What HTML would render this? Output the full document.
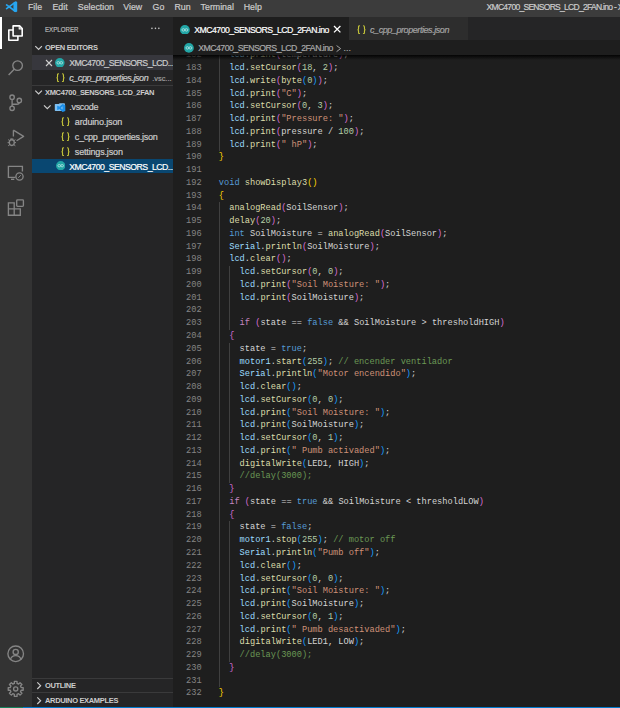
<!DOCTYPE html>
<html><head><meta charset="utf-8">
<style>
*{margin:0;padding:0;box-sizing:border-box}
html,body{width:620px;height:708px;overflow:hidden;background:#1e1e1e}
body{position:relative;font-family:"Liberation Sans",sans-serif;color:#cccccc}
.abs{position:absolute}
.t{position:absolute;white-space:pre;line-height:1;-webkit-text-stroke:0.2px currentColor}
#title{left:0;top:0;width:620px;height:16.8px;background:#3c3c3c}
#act{left:0;top:16.8px;width:32px;height:690px;background:#333333}
#side{left:32px;top:16.8px;width:141px;height:690px;background:#252526}
#tabs{left:173px;top:16.8px;width:447px;height:23.4px;background:#252526}
#status{left:0;top:706.7px;width:620px;height:2px;background:#007acc}
.menu{font-size:8.8px;color:#cccccc;top:3.3px}
.ln{position:absolute;left:173px;width:28.6px;text-align:right;font-family:"Liberation Mono",monospace;font-size:8.675px;line-height:12.764px;height:12.764px;color:#858585;white-space:pre}
.cl{position:absolute;left:218.8px;font-family:"Liberation Mono",monospace;font-size:8.675px;line-height:12.764px;height:12.764px;color:#d4d4d4;white-space:pre}
.ig{position:absolute;width:1px;background:#404040}
#editor{left:173px;top:54.4px;width:447px;height:652px;overflow:hidden;background:#1e1e1e}
#editor-inner{position:absolute;left:-173px;top:-54.4px;width:620px;height:708px}
#shadow{left:173px;top:55.2px;width:447px;height:5px;background:linear-gradient(#000000e0,#00000080 40%,#00000000)}
.sb{font-size:8.7px;color:#cccccc}
.hd{font-size:7.5px;font-weight:bold;color:#cccccc;letter-spacing:-0.33px;-webkit-text-stroke:0}
.it{font-style:italic}
</style></head><body>
<div id="title" class="abs"></div>
<!-- VS Code logo -->
<svg class="abs" style="left:0;top:0" width="24" height="16" viewBox="0 0 24 16">
<path fill="#27a6f0" d="M13.4 2.7 L15.9 1.3 L17.2 2.1 V11.5 L15.9 12.3 L13.4 11 Z"/>
<path stroke="#27a6f0" stroke-width="1.75" stroke-linecap="round" fill="none" d="M15.2 2.4 L6.6 8.6 M15.2 11.2 L6.6 4.9"/>
</svg>
<div class="t menu" id="m1" style="left:28px">File</div>
<div class="t menu" id="m2" style="left:52.5px">Edit</div>
<div class="t menu" id="m3" style="left:77.8px">Selection</div>
<div class="t menu" id="m4" style="left:123.3px">View</div>
<div class="t menu" id="m5" style="left:152.6px">Go</div>
<div class="t menu" id="m6" style="left:174.5px">Run</div>
<div class="t menu" id="m7" style="left:200.6px">Terminal</div>
<div class="t menu" id="m8" style="left:243.7px">Help</div>
<div class="t menu" id="ttl" style="left:486.6px;top:3.2px;font-size:8.5px;letter-spacing:-0.71px">XMC4700_SENSORS_LCD_2FAN.ino - XMC</div>

<div id="act" class="abs"></div>
<div class="abs" style="left:0;top:16.8px;width:1.6px;height:32px;background:#ffffff"></div>
<svg class="abs" style="left:0;top:0" width="32" height="708" viewBox="0 0 32 708" fill="none" stroke="#858585" stroke-width="1.35">
  <!-- explorer -->
  <g stroke="#ffffff" stroke-width="1.6" stroke-linejoin="round">
    <path d="M13.1 25.9 H19.6 L22.2 28.5 V36 H13.1 Z"/>
    <path d="M19.2 26.2 V28.9 H22" stroke-width="1.1"/>
    <path d="M13.1 30 H8.8 V40.3 H17.9 V36"/>
  </g>
  <!-- search -->
  <circle cx="17.6" cy="65.6" r="4.8"/>
  <path d="M14.2 69.2 L8.6 75"/>
  <!-- source control -->
  <circle cx="12.1" cy="97.2" r="2.2"/>
  <circle cx="12.1" cy="108.3" r="2.2"/>
  <circle cx="19.3" cy="100.4" r="2.2"/>
  <path d="M12.1 99.4 V106.1 M12.1 104.2 H16.8 Q19.3 104.2 19.3 102.6"/>
  <!-- run debug -->
  <path d="M13.4 130.2 V136.6 M13.4 130.2 L23.6 136.4 L16.6 140.8" stroke-linejoin="round"/>
  <ellipse cx="11.8" cy="142.6" rx="2.5" ry="2.9"/>
  <path d="M10.3 139.4 Q11.8 138.4 13.3 139.4" />
  <path d="M8.2 139.6 L9.6 140.6 M7.6 142.6 H9.2 M8.2 145.8 L9.6 144.8 M15.4 139.6 L14 140.6 M16 142.6 H14.4 M15.4 145.8 L14 144.8" stroke-width="1"/>
  <!-- remote -->
  <path d="M15.5 177.3 H8.4 V166.3 H22.4 V171.5"/>
  <path d="M11 179.3 H14.3"/>
  <circle cx="19.5" cy="176.5" r="3.6"/>
  <path d="M18.3 177.8 L20.8 175.2" stroke-width="1"/>
  <!-- extensions -->
  <path d="M8.4 202.9 H14.2 V215.2 H8.4 Z M8.4 208.9 H20.3 V215.2 H14.2"/>
  <rect x="16.7" y="199.9" width="6.7" height="6.5" rx="0.8"/>
  <!-- account -->
  <circle cx="15.7" cy="653.8" r="7.8"/>
  <circle cx="15.7" cy="651.9" r="2.6"/>
  <path d="M10.4 659.9 Q11.2 655.6 15.7 655.6 Q20.2 655.6 21 659.9"/>
  <!-- gear -->
  <circle cx="15.7" cy="688.9" r="2.1"/>
  <path stroke-linejoin="round" d="M14.35 683.47 L14.36 681.42 L17.04 681.42 L17.05 683.47 L18.59 684.10 L20.05 682.66 L21.94 684.55 L20.50 686.01 L21.13 687.55 L23.18 687.56 L23.18 690.24 L21.13 690.25 L20.50 691.79 L21.94 693.25 L20.05 695.14 L18.59 693.70 L17.05 694.33 L17.04 696.38 L14.36 696.38 L14.35 694.33 L12.81 693.70 L11.35 695.14 L9.46 693.25 L10.90 691.79 L10.27 690.25 L8.22 690.24 L8.22 687.56 L10.27 687.55 L10.90 686.01 L9.46 684.55 L11.35 682.66 L12.81 684.10 Z"/>
</svg>

<div id="side" class="abs"></div>
<div class="t" id="explorer" style="left:45.4px;top:25.9px;font-size:7.7px;color:#bbbbbb;transform:scaleX(0.80);transform-origin:0 0">EXPLORER</div>
<svg class="abs" style="left:150px;top:27px" width="12" height="3" viewBox="0 0 12 3" fill="#cccccc"><circle cx="1.95" cy="1.35" r="0.8"/><circle cx="5.45" cy="1.35" r="0.8"/><circle cx="8.85" cy="1.35" r="0.8"/></svg>
<!-- open editors -->
<svg class="abs" style="left:0;top:0" width="173" height="708" viewBox="0 0 173 708" fill="none" stroke="#cccccc" stroke-width="1.2">
  <path d="M35.3 46.2 L38.6 49.5 L41.9 46.2"/>
  <path d="M35.3 90.7 L38.6 94 L41.9 90.7"/>
  <path d="M44 105.4 L47.3 108.7 L50.6 105.4"/>
  <path d="M37.3 682.4 L40.6 685.7 L37.3 689"/>
  <path d="M37.3 697.4 L40.6 700.7 L37.3 704"/>
</svg>
<div class="t hd" id="oe" style="left:45px;top:44.0px">OPEN EDITORS</div>
<div class="abs" style="left:32px;top:55.2px;width:140.7px;height:14.8px;background:#37373d"></div>
<div class="abs" style="left:32px;top:158.5px;width:140.7px;height:14.8px;background:#094771"></div>

<div class="abs" style="left:32px;top:84.7px;width:141px;height:1px;background:#3a3a3b"></div>
<div class="t hd" id="proj" style="left:45px;top:88.7px">XMC4700_SENSORS_LCD_2FAN</div>
<div class="abs" style="left:32px;top:677.9px;width:141px;height:1px;background:#3a3a3b"></div>
<div class="abs" style="left:32px;top:692.4px;width:141px;height:1px;background:#3a3a3b"></div>
<div class="t hd" id="outl" style="left:45px;top:681.8px">OUTLINE</div>
<div class="t hd" id="ardex" style="left:45px;top:696.8px">ARDUINO EXAMPLES</div>

<div class="abs" style="left:0;top:0;width:172.7px;height:708px;overflow:hidden">
<svg class="abs" style="left:45.30px;top:58.65px" width="8.00" height="8.00" viewBox="-4.0 -4.0 8.0 8.0" stroke="#d0d0d0" stroke-width="1.1"><path d="M-3.0 -3.0 L3.0 3.0 M3.0 -3.0 L-3.0 3.0"/></svg>
<svg class="abs" style="left:55.30px;top:57.85px" width="9.60" height="9.60" viewBox="-5 -5 10 10"><circle r="5" fill="#22a6a6"/><ellipse cx="-1.55" cy="0" rx="1.45" ry="1.25" fill="none" stroke="#b8e4e4" stroke-width="0.85"/><ellipse cx="1.55" cy="0" rx="1.45" ry="1.25" fill="none" stroke="#b8e4e4" stroke-width="0.85"/></svg>
<div class="t" id="r1" style="left:69.20px;top:59.04px;font-size:8.7px;color:#cccccc;letter-spacing:-0.5px">XMC4700_SENSORS_LCD...</div>
<svg class="abs" style="left:55.50px;top:72.60px" width="9.0" height="9.4" viewBox="0 0 18 19" fill="none" stroke="#c4c43a" stroke-width="2.3" stroke-linecap="round"><path d="M5 1.5 C3 1.5 3 2.5 3 4.5 V7.5 C3 9 2.5 9.5 1 9.5 C2.5 9.5 3 10 3 11.5 V14.5 C3 16.5 3 17.5 5 17.5"/><path d="M13 1.5 C15 1.5 15 2.5 15 4.5 V7.5 C15 9 15.5 9.5 17 9.5 C15.5 9.5 15 10 15 11.5 V14.5 C15 16.5 15 17.5 13 17.5"/></svg>
<div class="t" id="r2" style="left:69.20px;top:73.68px;font-size:9.0px;color:#cccccc;font-style:italic;letter-spacing:-0.43px">c_cpp_properties.json</div>
<div class="t" id="r2b" style="left:152.20px;top:75.04px;font-size:7.4px;color:#a0a0a0;">.vsc...</div>
<svg class="abs" style="left:52px;top:100px" width="16" height="14" viewBox="52 100 16 14"><path d="M54.8 104.6 Q54.8 104 55.4 104 L58.6 104 L59.8 103.2 L64.2 103.2 Q64.9 103.2 64.9 103.9 L64.9 110.2 Q64.9 110.9 64.2 110.9 L55.5 110.9 Q54.8 110.9 54.8 110.2 Z" fill="#7fbff0"/><path d="M62.6 104.0 L65.3 105.2 V110.9 L62.6 112.1 L59.3 109.1 L57.9 110.1 L57.2 109.7 V106.1 L57.9 105.7 L59.3 106.8 Z M62.6 106.2 L60.8 107.9 L62.6 109.6 Z" fill="#1c8fea"/></svg>
<div class="t" id="vs" style="left:69.20px;top:103.48px;font-size:9.0px;color:#cccccc;letter-spacing:-0.28px">.vscode</div>
<svg class="abs" style="left:61.00px;top:116.90px" width="9.0" height="9.4" viewBox="0 0 18 19" fill="none" stroke="#c4c43a" stroke-width="2.3" stroke-linecap="round"><path d="M5 1.5 C3 1.5 3 2.5 3 4.5 V7.5 C3 9 2.5 9.5 1 9.5 C2.5 9.5 3 10 3 11.5 V14.5 C3 16.5 3 17.5 5 17.5"/><path d="M13 1.5 C15 1.5 15 2.5 15 4.5 V7.5 C15 9 15.5 9.5 17 9.5 C15.5 9.5 15 10 15 11.5 V14.5 C15 16.5 15 17.5 13 17.5"/></svg>
<div class="t" id="aj" style="left:74.80px;top:118.38px;font-size:9.0px;color:#cccccc;letter-spacing:-0.14px">arduino.json</div>
<svg class="abs" style="left:61.00px;top:132.10px" width="9.0" height="9.4" viewBox="0 0 18 19" fill="none" stroke="#c4c43a" stroke-width="2.3" stroke-linecap="round"><path d="M5 1.5 C3 1.5 3 2.5 3 4.5 V7.5 C3 9 2.5 9.5 1 9.5 C2.5 9.5 3 10 3 11.5 V14.5 C3 16.5 3 17.5 5 17.5"/><path d="M13 1.5 C15 1.5 15 2.5 15 4.5 V7.5 C15 9 15.5 9.5 17 9.5 C15.5 9.5 15 10 15 11.5 V14.5 C15 16.5 15 17.5 13 17.5"/></svg>
<div class="t" id="cj" style="left:74.80px;top:133.18px;font-size:9.0px;color:#cccccc;letter-spacing:-0.25px">c_cpp_properties.json</div>
<svg class="abs" style="left:61.00px;top:146.90px" width="9.0" height="9.4" viewBox="0 0 18 19" fill="none" stroke="#c4c43a" stroke-width="2.3" stroke-linecap="round"><path d="M5 1.5 C3 1.5 3 2.5 3 4.5 V7.5 C3 9 2.5 9.5 1 9.5 C2.5 9.5 3 10 3 11.5 V14.5 C3 16.5 3 17.5 5 17.5"/><path d="M13 1.5 C15 1.5 15 2.5 15 4.5 V7.5 C15 9 15.5 9.5 17 9.5 C15.5 9.5 15 10 15 11.5 V14.5 C15 16.5 15 17.5 13 17.5"/></svg>
<div class="t" id="sj" style="left:74.80px;top:147.98px;font-size:9.0px;color:#cccccc;letter-spacing:-0.16px">settings.json</div>
<svg class="abs" style="left:55.50px;top:161.00px" width="9.40" height="9.40" viewBox="-5 -5 10 10"><circle r="5" fill="#22a6a6"/><ellipse cx="-1.55" cy="0" rx="1.45" ry="1.25" fill="none" stroke="#b8e4e4" stroke-width="0.85"/><ellipse cx="1.55" cy="0" rx="1.45" ry="1.25" fill="none" stroke="#b8e4e4" stroke-width="0.85"/></svg>
<div class="t" id="r3" style="left:69.20px;top:162.94px;font-size:8.7px;color:#ffffff;letter-spacing:-0.5px">XMC4700_SENSORS_LCD...</div>
</div>

<div id="tabs" class="abs"></div>
<div class="abs" style="left:173.2px;top:16.8px;width:175.8px;height:23.4px;background:#1e1e1e"></div>
<div class="abs" style="left:349px;top:16.8px;width:119px;height:23.4px;background:#2d2d2d"></div>

<div id="editor" class="abs"><div id="editor-inner">
<div class="ln" style="top:49.218px">182</div>
<div class="cl" style="top:49.218px">  <span style="color:#9cdcfe">lcd</span><span style="color:#d4d4d4">.</span><span style="color:#dcdcaa">print</span><span style="color:#da70d6">(</span><span style="color:#d4d4d4">temperature</span><span style="color:#da70d6">)</span><span style="color:#d4d4d4">;</span></div>
<div class="ln" style="top:61.982px">183</div>
<div class="cl" style="top:61.982px">  <span style="color:#9cdcfe">lcd</span><span style="color:#d4d4d4">.</span><span style="color:#dcdcaa">setCursor</span><span style="color:#da70d6">(</span><span style="color:#b5cea8">18</span><span style="color:#d4d4d4">,</span> <span style="color:#b5cea8">2</span><span style="color:#da70d6">)</span><span style="color:#d4d4d4">;</span></div>
<div class="ln" style="top:74.746px">184</div>
<div class="cl" style="top:74.746px">  <span style="color:#9cdcfe">lcd</span><span style="color:#d4d4d4">.</span><span style="color:#dcdcaa">write</span><span style="color:#da70d6">(</span><span style="color:#dcdcaa">byte</span><span style="color:#179fff">(</span><span style="color:#b5cea8">0</span><span style="color:#179fff">)</span><span style="color:#da70d6">)</span><span style="color:#d4d4d4">;</span></div>
<div class="ln" style="top:87.510px">185</div>
<div class="cl" style="top:87.510px">  <span style="color:#9cdcfe">lcd</span><span style="color:#d4d4d4">.</span><span style="color:#dcdcaa">print</span><span style="color:#da70d6">(</span><span style="color:#ce9178">&quot;C&quot;</span><span style="color:#da70d6">)</span><span style="color:#d4d4d4">;</span></div>
<div class="ln" style="top:100.274px">186</div>
<div class="cl" style="top:100.274px">  <span style="color:#9cdcfe">lcd</span><span style="color:#d4d4d4">.</span><span style="color:#dcdcaa">setCursor</span><span style="color:#da70d6">(</span><span style="color:#b5cea8">0</span><span style="color:#d4d4d4">,</span> <span style="color:#b5cea8">3</span><span style="color:#da70d6">)</span><span style="color:#d4d4d4">;</span></div>
<div class="ln" style="top:113.038px">187</div>
<div class="cl" style="top:113.038px">  <span style="color:#9cdcfe">lcd</span><span style="color:#d4d4d4">.</span><span style="color:#dcdcaa">print</span><span style="color:#da70d6">(</span><span style="color:#ce9178">&quot;Pressure: &quot;</span><span style="color:#da70d6">)</span><span style="color:#d4d4d4">;</span></div>
<div class="ln" style="top:125.802px">188</div>
<div class="cl" style="top:125.802px">  <span style="color:#9cdcfe">lcd</span><span style="color:#d4d4d4">.</span><span style="color:#dcdcaa">print</span><span style="color:#da70d6">(</span><span style="color:#d4d4d4">pressure</span> <span style="color:#d4d4d4">/</span> <span style="color:#b5cea8">100</span><span style="color:#da70d6">)</span><span style="color:#d4d4d4">;</span></div>
<div class="ln" style="top:138.566px">189</div>
<div class="cl" style="top:138.566px">  <span style="color:#9cdcfe">lcd</span><span style="color:#d4d4d4">.</span><span style="color:#dcdcaa">print</span><span style="color:#da70d6">(</span><span style="color:#ce9178">&quot; hP&quot;</span><span style="color:#da70d6">)</span><span style="color:#d4d4d4">;</span></div>
<div class="ln" style="top:151.330px">190</div>
<div class="cl" style="top:151.330px"><span style="color:#ffd700">}</span></div>
<div class="ln" style="top:164.094px">191</div>
<div class="cl" style="top:164.094px"></div>
<div class="ln" style="top:176.858px">192</div>
<div class="cl" style="top:176.858px"><span style="color:#569cd6">void</span> <span style="color:#dcdcaa">showDisplay3</span><span style="color:#ffd700">(</span><span style="color:#ffd700">)</span></div>
<div class="ln" style="top:189.622px">193</div>
<div class="cl" style="top:189.622px"><span style="color:#ffd700">{</span></div>
<div class="ln" style="top:202.386px">194</div>
<div class="cl" style="top:202.386px">  <span style="color:#dcdcaa">analogRead</span><span style="color:#da70d6">(</span><span style="color:#d4d4d4">SoilSensor</span><span style="color:#da70d6">)</span><span style="color:#d4d4d4">;</span></div>
<div class="ln" style="top:215.150px">195</div>
<div class="cl" style="top:215.150px">  <span style="color:#dcdcaa">delay</span><span style="color:#da70d6">(</span><span style="color:#b5cea8">20</span><span style="color:#da70d6">)</span><span style="color:#d4d4d4">;</span></div>
<div class="ln" style="top:227.914px">196</div>
<div class="cl" style="top:227.914px">  <span style="color:#569cd6">int</span> <span style="color:#d4d4d4">SoilMoisture</span> <span style="color:#d4d4d4">=</span> <span style="color:#dcdcaa">analogRead</span><span style="color:#da70d6">(</span><span style="color:#d4d4d4">SoilSensor</span><span style="color:#da70d6">)</span><span style="color:#d4d4d4">;</span></div>
<div class="ln" style="top:240.678px">197</div>
<div class="cl" style="top:240.678px">  <span style="color:#9cdcfe">Serial</span><span style="color:#d4d4d4">.</span><span style="color:#dcdcaa">println</span><span style="color:#da70d6">(</span><span style="color:#d4d4d4">SoilMoisture</span><span style="color:#da70d6">)</span><span style="color:#d4d4d4">;</span></div>
<div class="ln" style="top:253.442px">198</div>
<div class="cl" style="top:253.442px">  <span style="color:#9cdcfe">lcd</span><span style="color:#d4d4d4">.</span><span style="color:#dcdcaa">clear</span><span style="color:#da70d6">(</span><span style="color:#da70d6">)</span><span style="color:#d4d4d4">;</span></div>
<div class="ln" style="top:266.206px">199</div>
<div class="cl" style="top:266.206px">    <span style="color:#9cdcfe">lcd</span><span style="color:#d4d4d4">.</span><span style="color:#dcdcaa">setCursor</span><span style="color:#da70d6">(</span><span style="color:#b5cea8">0</span><span style="color:#d4d4d4">,</span> <span style="color:#b5cea8">0</span><span style="color:#da70d6">)</span><span style="color:#d4d4d4">;</span></div>
<div class="ln" style="top:278.970px">200</div>
<div class="cl" style="top:278.970px">    <span style="color:#9cdcfe">lcd</span><span style="color:#d4d4d4">.</span><span style="color:#dcdcaa">print</span><span style="color:#da70d6">(</span><span style="color:#ce9178">&quot;Soil Moisture: &quot;</span><span style="color:#da70d6">)</span><span style="color:#d4d4d4">;</span></div>
<div class="ln" style="top:291.734px">201</div>
<div class="cl" style="top:291.734px">    <span style="color:#9cdcfe">lcd</span><span style="color:#d4d4d4">.</span><span style="color:#dcdcaa">print</span><span style="color:#da70d6">(</span><span style="color:#d4d4d4">SoilMoisture</span><span style="color:#da70d6">)</span><span style="color:#d4d4d4">;</span></div>
<div class="ln" style="top:304.498px">202</div>
<div class="cl" style="top:304.498px"></div>
<div class="ln" style="top:317.262px">203</div>
<div class="cl" style="top:317.262px">    <span style="color:#c586c0">if</span> <span style="color:#da70d6">(</span><span style="color:#d4d4d4">state</span> <span style="color:#d4d4d4">=</span><span style="color:#d4d4d4">=</span> <span style="color:#569cd6">false</span> <span style="color:#d4d4d4">&amp;</span><span style="color:#d4d4d4">&amp;</span> <span style="color:#d4d4d4">SoilMoisture</span> <span style="color:#d4d4d4">&gt;</span> <span style="color:#d4d4d4">thresholdHIGH</span><span style="color:#da70d6">)</span></div>
<div class="ln" style="top:330.026px">204</div>
<div class="cl" style="top:330.026px">  <span style="color:#da70d6">{</span></div>
<div class="ln" style="top:342.790px">205</div>
<div class="cl" style="top:342.790px">    <span style="color:#d4d4d4">state</span> <span style="color:#d4d4d4">=</span> <span style="color:#569cd6">true</span><span style="color:#d4d4d4">;</span></div>
<div class="ln" style="top:355.554px">206</div>
<div class="cl" style="top:355.554px">    <span style="color:#9cdcfe">motor1</span><span style="color:#d4d4d4">.</span><span style="color:#dcdcaa">start</span><span style="color:#179fff">(</span><span style="color:#b5cea8">255</span><span style="color:#179fff">)</span><span style="color:#d4d4d4">;</span> <span style="color:#6a9955">// encender ventilador</span></div>
<div class="ln" style="top:368.318px">207</div>
<div class="cl" style="top:368.318px">    <span style="color:#9cdcfe">Serial</span><span style="color:#d4d4d4">.</span><span style="color:#dcdcaa">println</span><span style="color:#179fff">(</span><span style="color:#ce9178">&quot;Motor encendido&quot;</span><span style="color:#179fff">)</span><span style="color:#d4d4d4">;</span></div>
<div class="ln" style="top:381.082px">208</div>
<div class="cl" style="top:381.082px">    <span style="color:#9cdcfe">lcd</span><span style="color:#d4d4d4">.</span><span style="color:#dcdcaa">clear</span><span style="color:#179fff">(</span><span style="color:#179fff">)</span><span style="color:#d4d4d4">;</span></div>
<div class="ln" style="top:393.846px">209</div>
<div class="cl" style="top:393.846px">    <span style="color:#9cdcfe">lcd</span><span style="color:#d4d4d4">.</span><span style="color:#dcdcaa">setCursor</span><span style="color:#179fff">(</span><span style="color:#b5cea8">0</span><span style="color:#d4d4d4">,</span> <span style="color:#b5cea8">0</span><span style="color:#179fff">)</span><span style="color:#d4d4d4">;</span></div>
<div class="ln" style="top:406.610px">210</div>
<div class="cl" style="top:406.610px">    <span style="color:#9cdcfe">lcd</span><span style="color:#d4d4d4">.</span><span style="color:#dcdcaa">print</span><span style="color:#179fff">(</span><span style="color:#ce9178">&quot;Soil Moisture: &quot;</span><span style="color:#179fff">)</span><span style="color:#d4d4d4">;</span></div>
<div class="ln" style="top:419.374px">211</div>
<div class="cl" style="top:419.374px">    <span style="color:#9cdcfe">lcd</span><span style="color:#d4d4d4">.</span><span style="color:#dcdcaa">print</span><span style="color:#179fff">(</span><span style="color:#d4d4d4">SoilMoisture</span><span style="color:#179fff">)</span><span style="color:#d4d4d4">;</span></div>
<div class="ln" style="top:432.138px">212</div>
<div class="cl" style="top:432.138px">    <span style="color:#9cdcfe">lcd</span><span style="color:#d4d4d4">.</span><span style="color:#dcdcaa">setCursor</span><span style="color:#179fff">(</span><span style="color:#b5cea8">0</span><span style="color:#d4d4d4">,</span> <span style="color:#b5cea8">1</span><span style="color:#179fff">)</span><span style="color:#d4d4d4">;</span></div>
<div class="ln" style="top:444.902px">213</div>
<div class="cl" style="top:444.902px">    <span style="color:#9cdcfe">lcd</span><span style="color:#d4d4d4">.</span><span style="color:#dcdcaa">print</span><span style="color:#179fff">(</span><span style="color:#ce9178">&quot; Pumb activaded&quot;</span><span style="color:#179fff">)</span><span style="color:#d4d4d4">;</span></div>
<div class="ln" style="top:457.666px">214</div>
<div class="cl" style="top:457.666px">    <span style="color:#dcdcaa">digitalWrite</span><span style="color:#179fff">(</span><span style="color:#d4d4d4">LED1</span><span style="color:#d4d4d4">,</span> <span style="color:#d4d4d4">HIGH</span><span style="color:#179fff">)</span><span style="color:#d4d4d4">;</span></div>
<div class="ln" style="top:470.430px">215</div>
<div class="cl" style="top:470.430px">    <span style="color:#6a9955">//delay(3000);</span></div>
<div class="ln" style="top:483.194px">216</div>
<div class="cl" style="top:483.194px">  <span style="color:#da70d6">}</span></div>
<div class="ln" style="top:495.958px">217</div>
<div class="cl" style="top:495.958px">  <span style="color:#c586c0">if</span> <span style="color:#da70d6">(</span><span style="color:#d4d4d4">state</span> <span style="color:#d4d4d4">=</span><span style="color:#d4d4d4">=</span> <span style="color:#569cd6">true</span> <span style="color:#d4d4d4">&amp;</span><span style="color:#d4d4d4">&amp;</span> <span style="color:#d4d4d4">SoilMoisture</span> <span style="color:#d4d4d4">&lt;</span> <span style="color:#d4d4d4">thresholdLOW</span><span style="color:#da70d6">)</span></div>
<div class="ln" style="top:508.722px">218</div>
<div class="cl" style="top:508.722px">  <span style="color:#da70d6">{</span></div>
<div class="ln" style="top:521.486px">219</div>
<div class="cl" style="top:521.486px">    <span style="color:#d4d4d4">state</span> <span style="color:#d4d4d4">=</span> <span style="color:#569cd6">false</span><span style="color:#d4d4d4">;</span></div>
<div class="ln" style="top:534.250px">220</div>
<div class="cl" style="top:534.250px">    <span style="color:#9cdcfe">motor1</span><span style="color:#d4d4d4">.</span><span style="color:#dcdcaa">stop</span><span style="color:#179fff">(</span><span style="color:#b5cea8">255</span><span style="color:#179fff">)</span><span style="color:#d4d4d4">;</span> <span style="color:#6a9955">// motor off</span></div>
<div class="ln" style="top:547.014px">221</div>
<div class="cl" style="top:547.014px">    <span style="color:#9cdcfe">Serial</span><span style="color:#d4d4d4">.</span><span style="color:#dcdcaa">println</span><span style="color:#179fff">(</span><span style="color:#ce9178">&quot;Pumb off&quot;</span><span style="color:#179fff">)</span><span style="color:#d4d4d4">;</span></div>
<div class="ln" style="top:559.778px">222</div>
<div class="cl" style="top:559.778px">    <span style="color:#9cdcfe">lcd</span><span style="color:#d4d4d4">.</span><span style="color:#dcdcaa">clear</span><span style="color:#179fff">(</span><span style="color:#179fff">)</span><span style="color:#d4d4d4">;</span></div>
<div class="ln" style="top:572.542px">223</div>
<div class="cl" style="top:572.542px">    <span style="color:#9cdcfe">lcd</span><span style="color:#d4d4d4">.</span><span style="color:#dcdcaa">setCursor</span><span style="color:#179fff">(</span><span style="color:#b5cea8">0</span><span style="color:#d4d4d4">,</span> <span style="color:#b5cea8">0</span><span style="color:#179fff">)</span><span style="color:#d4d4d4">;</span></div>
<div class="ln" style="top:585.306px">224</div>
<div class="cl" style="top:585.306px">    <span style="color:#9cdcfe">lcd</span><span style="color:#d4d4d4">.</span><span style="color:#dcdcaa">print</span><span style="color:#179fff">(</span><span style="color:#ce9178">&quot;Soil Moisture: &quot;</span><span style="color:#179fff">)</span><span style="color:#d4d4d4">;</span></div>
<div class="ln" style="top:598.070px">225</div>
<div class="cl" style="top:598.070px">    <span style="color:#9cdcfe">lcd</span><span style="color:#d4d4d4">.</span><span style="color:#dcdcaa">print</span><span style="color:#179fff">(</span><span style="color:#d4d4d4">SoilMoisture</span><span style="color:#179fff">)</span><span style="color:#d4d4d4">;</span></div>
<div class="ln" style="top:610.834px">226</div>
<div class="cl" style="top:610.834px">    <span style="color:#9cdcfe">lcd</span><span style="color:#d4d4d4">.</span><span style="color:#dcdcaa">setCursor</span><span style="color:#179fff">(</span><span style="color:#b5cea8">0</span><span style="color:#d4d4d4">,</span> <span style="color:#b5cea8">1</span><span style="color:#179fff">)</span><span style="color:#d4d4d4">;</span></div>
<div class="ln" style="top:623.598px">227</div>
<div class="cl" style="top:623.598px">    <span style="color:#9cdcfe">lcd</span><span style="color:#d4d4d4">.</span><span style="color:#dcdcaa">print</span><span style="color:#179fff">(</span><span style="color:#ce9178">&quot; Pumb desactivaded&quot;</span><span style="color:#179fff">)</span><span style="color:#d4d4d4">;</span></div>
<div class="ln" style="top:636.362px">228</div>
<div class="cl" style="top:636.362px">    <span style="color:#dcdcaa">digitalWrite</span><span style="color:#179fff">(</span><span style="color:#d4d4d4">LED1</span><span style="color:#d4d4d4">,</span> <span style="color:#d4d4d4">LOW</span><span style="color:#179fff">)</span><span style="color:#d4d4d4">;</span></div>
<div class="ln" style="top:649.126px">229</div>
<div class="cl" style="top:649.126px">    <span style="color:#6a9955">//delay(3000);</span></div>
<div class="ln" style="top:661.890px">230</div>
<div class="cl" style="top:661.890px">  <span style="color:#da70d6">}</span></div>
<div class="ln" style="top:674.654px">231</div>
<div class="cl" style="top:674.654px"></div>
<div class="ln" style="top:687.418px">232</div>
<div class="cl" style="top:687.418px"><span style="color:#ffd700">}</span></div>
<div class="ig" style="left:218.80px;top:49.22px;height:102.11px"></div>
<div class="ig" style="left:218.80px;top:202.39px;height:485.03px"></div>
<div class="ig" style="left:229.21px;top:266.21px;height:63.82px"></div>
<div class="ig" style="left:229.21px;top:342.79px;height:140.40px"></div>
<div class="ig" style="left:229.21px;top:521.49px;height:140.40px"></div>
</div></div>
<div class="abs" style="left:173px;top:40.2px;width:447px;height:15px;background:#1e1e1e"></div>
<svg class="abs" style="left:180.20px;top:24.60px" width="9.80" height="9.80" viewBox="-5 -5 10 10"><circle r="5" fill="#22a6a6"/><ellipse cx="-1.55" cy="0" rx="1.45" ry="1.25" fill="none" stroke="#b8e4e4" stroke-width="0.85"/><ellipse cx="1.55" cy="0" rx="1.45" ry="1.25" fill="none" stroke="#b8e4e4" stroke-width="0.85"/></svg>
<div class="t" id="tab1" style="left:194.20px;top:26.24px;font-size:8.7px;color:#ffffff;letter-spacing:-0.5px">XMC4700_SENSORS_LCD_2FAN.ino</div>
<svg class="abs" style="left:333.40px;top:24.90px" width="8.40" height="8.40" viewBox="-4.2 -4.2 8.4 8.4" stroke="#ffffff" stroke-width="1.3"><path d="M-3.2 -3.2 L3.2 3.2 M3.2 -3.2 L-3.2 3.2"/></svg>
<svg class="abs" style="left:356.80px;top:24.90px" width="9.0" height="9.4" viewBox="0 0 18 19" fill="none" stroke="#c4c43a" stroke-width="2.3" stroke-linecap="round"><path d="M5 1.5 C3 1.5 3 2.5 3 4.5 V7.5 C3 9 2.5 9.5 1 9.5 C2.5 9.5 3 10 3 11.5 V14.5 C3 16.5 3 17.5 5 17.5"/><path d="M13 1.5 C15 1.5 15 2.5 15 4.5 V7.5 C15 9 15.5 9.5 17 9.5 C15.5 9.5 15 10 15 11.5 V14.5 C15 16.5 15 17.5 13 17.5"/></svg>
<div class="t" id="tab2" style="left:370.00px;top:25.98px;font-size:9.0px;color:#a4a4a4;font-style:italic;letter-spacing:-0.43px">c_cpp_properties.json</div>
<svg class="abs" style="left:184.30px;top:43.10px" width="9.80" height="9.80" viewBox="-5 -5 10 10"><circle r="5" fill="#22a6a6"/><ellipse cx="-1.55" cy="0" rx="1.45" ry="1.25" fill="none" stroke="#b8e4e4" stroke-width="0.85"/><ellipse cx="1.55" cy="0" rx="1.45" ry="1.25" fill="none" stroke="#b8e4e4" stroke-width="0.85"/></svg>
<div class="t" id="bc" style="left:198.20px;top:43.84px;font-size:8.7px;color:#a9a9a9;letter-spacing:-0.5px">XMC4700_SENSORS_LCD_2FAN.ino</div>
<svg class="abs" style="left:330px;top:40px" width="16" height="14" viewBox="330 40 16 14" fill="none" stroke="#b0b0b0" stroke-width="0.9"><path d="M336.6 45.6 L340.6 48.6 L336.6 51.6"/></svg>
<div class="t" id="bcdots" style="left:343.60px;top:43.84px;font-size:8.7px;color:#a9a9a9;">...</div>
<div id="shadow" class="abs"></div>
<div id="status" class="abs"></div>
<div class="abs" style="left:0;top:706.7px;width:22.5px;height:2px;background:#16825d"></div>
</body></html>
